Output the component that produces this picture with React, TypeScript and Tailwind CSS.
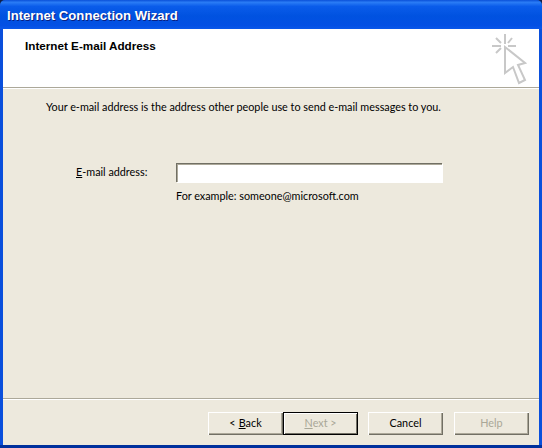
import React from 'react';

const font = "font-['Lato',sans-serif]";

const WizardButton: React.FC<{ children: React.ReactNode; disabled?: boolean; focused?: boolean; className?: string }> = ({ children, disabled, focused, className = '' }) => (
  <div
    className={`w-[75px] h-[23px] flex items-center justify-center text-[10.8px] leading-none bg-[#ede9dd] ${
      focused
        ? 'border border-black shadow-[inset_1px_1px_0_#fff,inset_-1px_-1px_0_#716f64]'
        : 'shadow-[inset_1px_1px_0_#fff,inset_-1px_-1px_0_#716f64,inset_-2px_-2px_0_#aca899]'
    } ${disabled ? 'text-[#a9a797]' : 'text-black'} ${className}`}
  >
    {children}
  </div>
);

const CursorIcon = () => (
  <svg width="36" height="52" viewBox="0 0 36 52" className="mt-[4px] mr-[12px]">
    <g stroke="#c8c8c8" strokeWidth="2" fill="none">
      <path d="M14 1v10M1 13h9M17 13h8" />
      <path d="M5 5l5 5M21 5l-4 5M5 20l5-5" />
    </g>
    <path d="M14 14v26l8-6 6 16 6-3-7-15 7-2z" fill="#fff" stroke="#c8c8c8" strokeWidth="2" />
  </svg>
);

export default function App() {
  return (
    <div className={`w-[542px] h-[448px] flex flex-col overflow-hidden bg-[#10204a] ${font}`}>
      <div className="h-[29px] shrink-0 flex items-center pl-[7px] pt-[3px] rounded-t-[5px] bg-[linear-gradient(180deg,#0a50d8_0%,#2a7cf5_8%,#0a5cea_22%,#0052e0_55%,#0350e4_88%,#0a58ea_100%)]">
        <span className="text-white text-[13.15px] font-bold font-['Liberation_Sans',sans-serif] [text-shadow:1px_1px_0_#0a1f80]">Internet Connection Wizard</span>
      </div>

      <div className="flex-1 flex flex-col px-[3px] bg-[#0a4fdc] min-h-0">
        <div className="h-[58px] shrink-0 bg-white flex justify-between">
          <div className="pl-[22px] pt-[10px] text-[11.7px] font-bold font-['Liberation_Sans',sans-serif] text-black leading-[14px]">Internet E-mail Address</div>
          <CursorIcon />
        </div>
        <div className="h-[2px] shrink-0 bg-[#aca899] border-b border-white" />

        <div className="flex-1 bg-[#ede9dd] text-[10.8px] text-black leading-[14px]">
          <p className="pl-[43px] pt-[11px]">Your e-mail address is the address other people use to send e-mail messages to you.</p>
          <div className="flex pt-[49px]">
            <label className="w-[173px] pl-[73px] pt-[2px]">
              <span className="underline">E</span>-mail address:
            </label>
            <div>
              <div className="w-[266px] h-[19px] bg-white shadow-[inset_1px_1px_0_#716f64,inset_2px_2px_0_#aca899,1px_1px_0_#fff]" />
              <div className="pt-[7px]">For example: someone@microsoft.com</div>
            </div>
          </div>
        </div>

        <div className="h-[2px] shrink-0 bg-[#aca899] border-b border-white" />
        <div className="h-[45px] shrink-0 flex justify-end pt-[12px] pr-[10px] bg-[#ede9dd]">
          <WizardButton>
            &lt; <span className="underline ml-[3px]">B</span>ack
          </WizardButton>
          <WizardButton disabled focused>
            <span className="underline">N</span>ext &gt;
          </WizardButton>
          <WizardButton className="ml-[10px]">Cancel</WizardButton>
          <WizardButton disabled className="ml-[11px]">Help</WizardButton>
        </div>
      </div>
      <div className="h-[3px] shrink-0 bg-[#00309c]" />
    </div>
  );
}
